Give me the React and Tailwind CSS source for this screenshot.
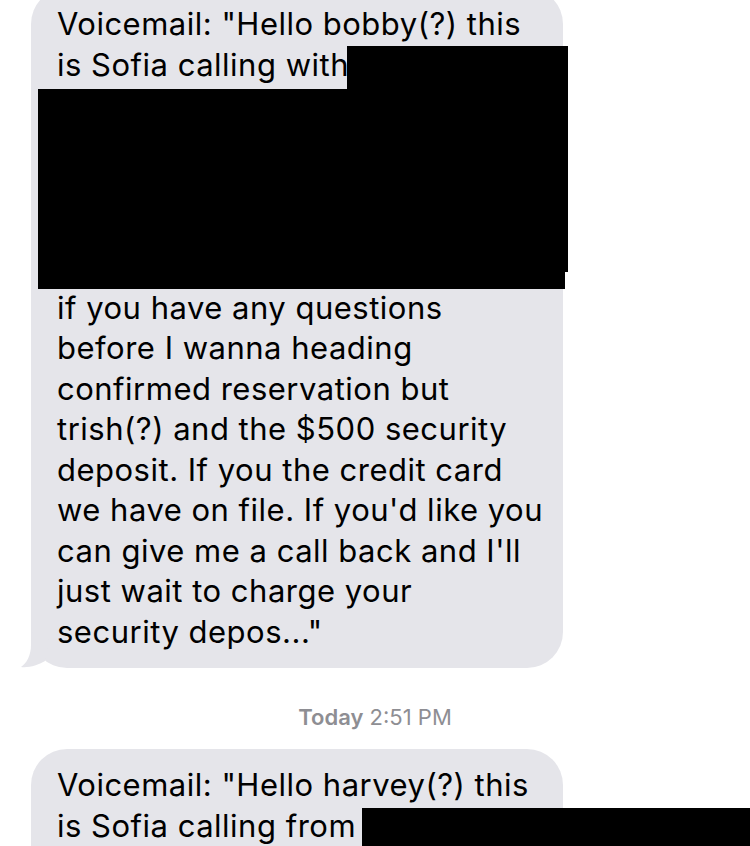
import React from "react";

const firstLines = [
  'Voicemail: "Hello bobby(?) this',
  "is Sofia calling with",
  "\u00a0",
  "\u00a0",
  "\u00a0",
  "\u00a0",
  "\u00a0",
  "if you have any questions",
  "before I wanna heading",
  "confirmed reservation but",
  "trish(?) and the $500 security",
  "deposit. If you the credit card",
  "we have on file. If you'd like you",
  "can give me a call back and I'll",
  "just wait to charge your",
  'security depos..."',
];

const secondLines = [
  'Voicemail: "Hello harvey(?) this',
  "is Sofia calling from",
  "\u00a0",
];

// little hook at the bottom-left of an incoming bubble
function Tail() {
  return (
    <svg
      className="absolute left-[-12px] bottom-0"
      width="40"
      height="40"
      viewBox="0 0 40 40"
    >
      <path d="M12 4 L12 17 C12 27 8 35 2 39 C10 40 19 37 26 33 L31 12 Z" fill="#e5e5ea" />
    </svg>
  );
}

function Bubble({ lines, className, tail, children }) {
  return (
    <div
      className={`relative ml-[31px] w-[532px] rounded-[36px] bg-[#e5e5ea] py-4 pl-[26px] text-[31px] leading-[40.5px] tracking-[0.5px] text-black ${className}`}
    >
      {lines.map((line, i) => (
        <div key={i} className="whitespace-nowrap">
          {line}
        </div>
      ))}
      {children}
      {tail && <Tail />}
    </div>
  );
}

export default function App() {
  return (
    <div className="w-[750px] h-[846px] overflow-hidden bg-white font-['Inter','Liberation_Sans',sans-serif]">
      <div className="flex flex-col">
        <Bubble lines={firstLines} className="mt-[-12px]" tail>
          {/* redactions */}
          <div className="absolute left-[316px] top-[58px] w-[221px] h-[44px] bg-black"></div>
          <div className="absolute left-[7px] top-[101px] w-[530px] h-[183px] bg-black"></div>
          <div className="absolute left-[7px] top-[284px] w-[527px] h-[17px] bg-black"></div>
        </Bubble>

        <div className="mt-[36px] text-center text-[22px] leading-[26px] text-[#8e8e93]">
          <span className="font-semibold">Today</span> 2:51 PM
        </div>

        <Bubble lines={secondLines} className="mt-[19px]">
          <div className="absolute left-[331px] top-[59px] w-[400px] h-[60px] bg-black"></div>
        </Bubble>
      </div>
    </div>
  );
}
